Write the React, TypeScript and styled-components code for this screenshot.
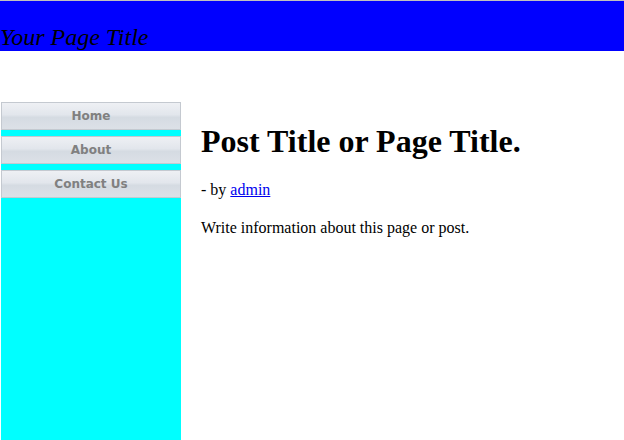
import React from 'react'
import styled, { createGlobalStyle } from 'styled-components'

const GlobalStyle = createGlobalStyle`
  html, body {
    margin: 0;
    padding: 0;
    background: #ffffff;
  }
  body {
    border-top: 1px solid #c0c0c0;
    font-family: "Liberation Serif", "Times New Roman", serif;
    color: #000000;
  }
`

const Header = styled.header`
  height: 50px;
  background: #0000ff;
`

const SiteTitle = styled.div`
  margin: 0;
  padding: 23px 0 0 0;
  font-size: 24px;
  font-style: italic;
  line-height: normal;
  color: #000000;
`

const Layout = styled.div`
  display: flex;
  align-items: flex-start;
  margin-top: 51px;
`

const Sidebar = styled.nav`
  width: 180px;
  margin-left: 1px;
  min-height: calc(100vh - 102px);
  background: #00ffff;
  display: flex;
  flex-direction: column;
  gap: 6px;
`

const NavButton = styled.a`
  display: flex;
  align-items: center;
  justify-content: center;
  box-sizing: border-box;
  height: 28px;
  border: 1px solid #c4c9d0;
  background: linear-gradient(#eef0f4 0%, #e2e6ec 45%, #d5dbe2 55%, #dce1e7 100%);
  color: #808080;
  font-family: "DejaVu Sans", Verdana, sans-serif;
  font-size: 12px;
  font-weight: bold;
  text-decoration: none;
  cursor: pointer;
`

const Main = styled.main`
  flex: 1;
  padding-left: 20px;
`

const PostTitle = styled.h1`
  font-size: 32px;
  margin: 21.44px 0 20px;
`

const Para = styled.p`
  font-size: 16px;
  line-height: 20px;
  margin: 18px 0;
`

const AuthorLink = styled.a`
  color: #0000ee;
`

const navItems = ['Home', 'About', 'Contact Us']

export default function App() {
  return (
    <>
      <GlobalStyle />
      <Header>
        <SiteTitle>Your Page Title</SiteTitle>
      </Header>
      <Layout>
        <Sidebar>
          {navItems.map((item) => (
            <NavButton key={item}>{item}</NavButton>
          ))}
        </Sidebar>
        <Main>
          <PostTitle>Post Title or Page Title.</PostTitle>
          <Para>
            - by <AuthorLink href="#">admin</AuthorLink>
          </Para>
          <Para>Write information about this page or post.</Para>
        </Main>
      </Layout>
    </>
  )
}
